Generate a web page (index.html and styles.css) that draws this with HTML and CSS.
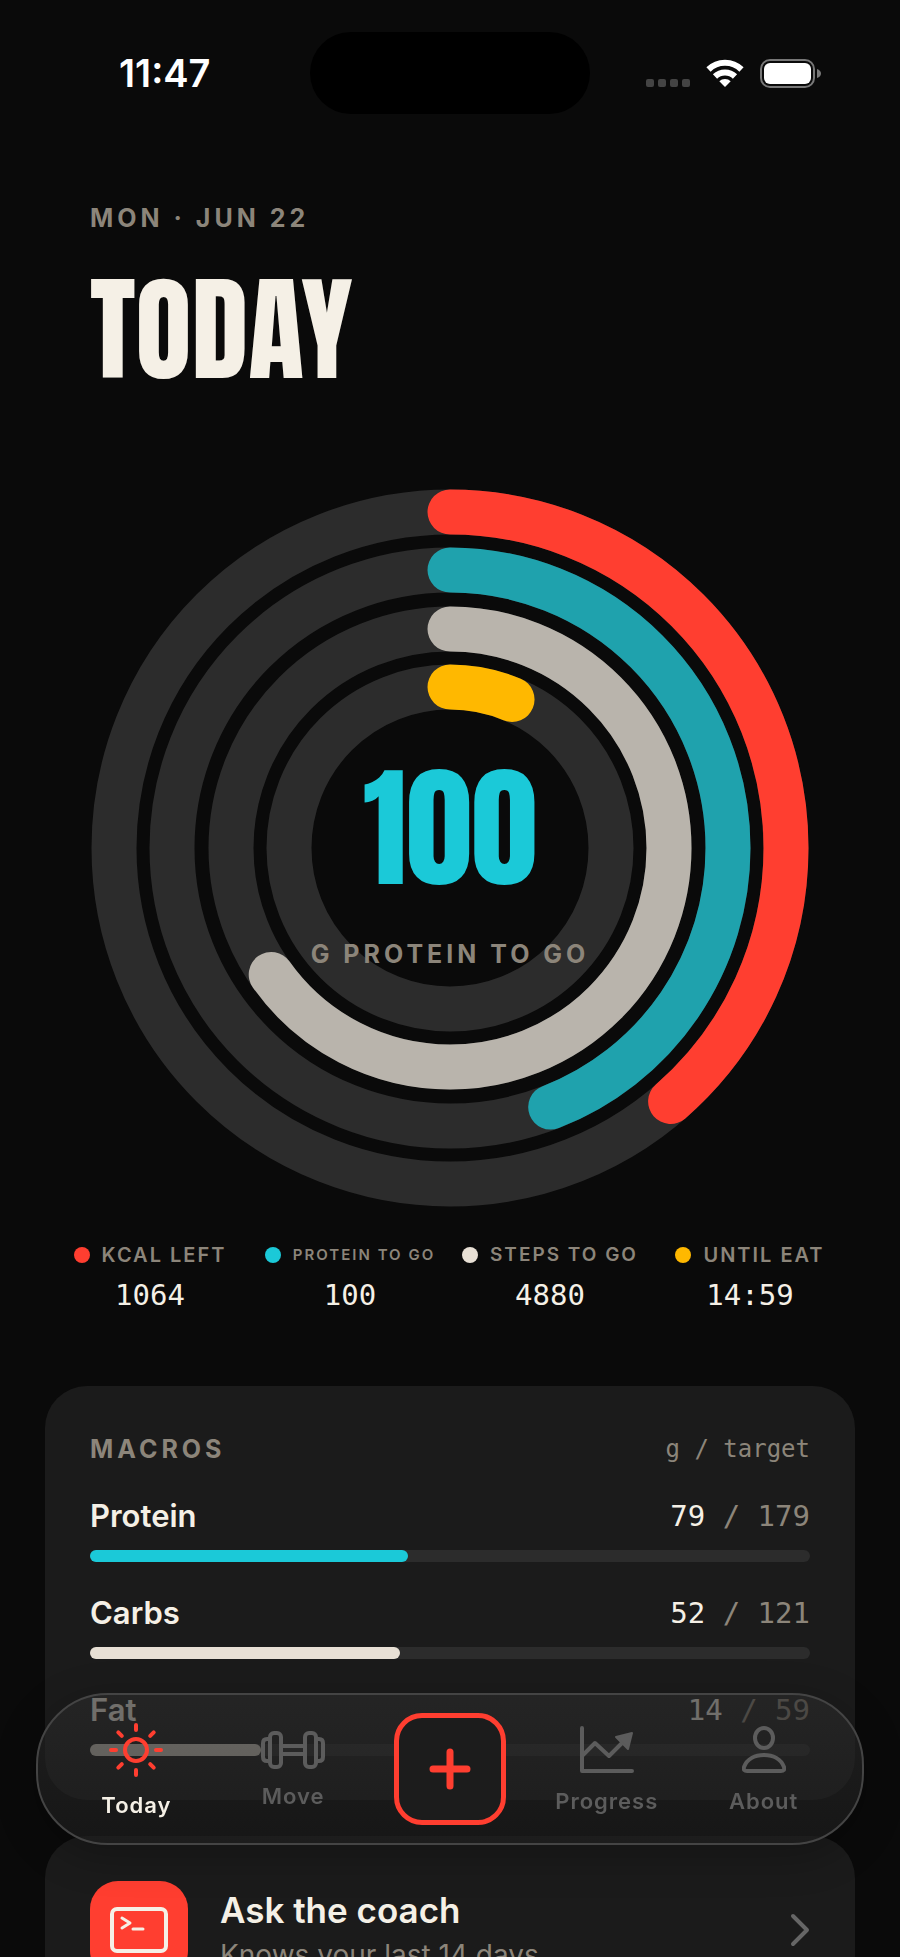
FILE: index.html
```html
<!DOCTYPE html>
<html lang="en">
<head>
  <meta charset="UTF-8">
  <meta name="viewport" content="width=device-width, initial-scale=1.0">
  <title>Today</title>
  <link rel="stylesheet" href="styles.css">
</head>
<body>
  <div class="screen">
    <div class="status-bar">
      <span class="time">11:47</span>
      <div class="island"></div>
      <div class="status-icons">
        <div class="signal"><i></i><i></i><i></i><i></i></div>
        <svg class="wifi" viewBox="0 0 38 28" fill="none" stroke="#fff">
          <path d="M2.5 10.5a23.500 23.500 0 0 1 33 0" stroke-width="6"/>
          <path d="M9 17.500a14.200 14.200 0 0 1 20 0" stroke-width="6"/>
          <path d="M13.300 22.300a8 8 0 0 1 11.400 0L19 28z" fill="#fff" stroke="none"/>
        </svg>
        <svg class="battery" viewBox="0 0 61 29">
          <rect x="1" y="1" width="53" height="27" rx="9" fill="none" stroke="#777" stroke-width="2"/>
          <rect x="4" y="4" width="47" height="21" rx="6" fill="#fff"/>
          <path d="M57 10v9q4-1.500 4-4.500t-4-4.500z" fill="#777"/>
        </svg>
      </div>
    </div>

    <header class="header">
      <p class="label">Mon · Jun 22</p>
      <h1>TODAY</h1>
    </header>

    <section class="rings">
      <svg viewBox="0 0 718 718" fill="none" stroke-width="45" stroke-linecap="round">
        <g stroke="#2c2c2c">
          <circle cx="359" cy="359" r="336"/>
          <circle cx="359" cy="359" r="278"/>
          <circle cx="359" cy="359" r="219"/>
          <circle cx="359" cy="359" r="161"/>
        </g>
        <g transform="rotate(-90 359 359)">
          <circle cx="359" cy="359" r="336" stroke="#ff3e30" pathLength="1000" stroke-dasharray="386 1000"/>
          <circle cx="359" cy="359" r="278" stroke="#1fa2ad" pathLength="1000" stroke-dasharray="441 1000"/>
          <circle cx="359" cy="359" r="219" stroke="#b9b4ac" pathLength="1000" stroke-dasharray="652 1000"/>
          <circle cx="359" cy="359" r="161" stroke="#ffb800" pathLength="1000" stroke-dasharray="63 1000"/>
        </g>
      </svg>
      <div class="rings-center">
        <strong>100</strong>
        <span class="label">g protein to go</span>
      </div>
    </section>

    <section class="legend">
      <div class="legend-item red">
        <span class="legend-label">Kcal left</span>
        <span class="value">1064</span>
      </div>
      <div class="legend-item cyan">
        <span class="legend-label small">Protein to go</span>
        <span class="value">100</span>
      </div>
      <div class="legend-item cream">
        <span class="legend-label medium">Steps to go</span>
        <span class="value">4880</span>
      </div>
      <div class="legend-item yellow">
        <span class="legend-label">Until eat</span>
        <span class="value">14:59</span>
      </div>
    </section>

    <section class="card macros">
      <div class="card-head">
        <h2 class="label">Macros</h2>
        <span class="unit">g / target</span>
      </div>
      <div class="macro">
        <div class="macro-row"><span>Protein</span><span class="value">79 <em>/ 179</em></span></div>
        <div class="bar"><div class="fill cyan" style="width: 44.1%"></div></div>
      </div>
      <div class="macro">
        <div class="macro-row"><span>Carbs</span><span class="value">52 <em>/ 121</em></span></div>
        <div class="bar"><div class="fill cream" style="width: 43%"></div></div>
      </div>
      <div class="macro">
        <div class="macro-row"><span>Fat</span><span class="value">14 <em>/ 59</em></span></div>
        <div class="bar"><div class="fill sand" style="width: 23.7%"></div></div>
      </div>
    </section>

    <a class="card coach" href="#coach">
      <span class="coach-icon">
        <svg viewBox="0 0 58 46" fill="none" stroke="#f5f0e6" stroke-width="4" stroke-linecap="round" stroke-linejoin="round">
          <rect x="2" y="2" width="54" height="42" rx="5"/>
          <path d="M12 11l8 5-8 5M23 22h10" stroke-width="3"/>
        </svg>
      </span>
      <span class="coach-text">
        <span class="coach-title">Ask the coach</span>
        <span class="coach-sub">Knows your last 14 days</span>
      </span>
      <svg class="chevron" viewBox="0 0 20 34" fill="none" stroke="#666" stroke-width="4" stroke-linecap="round" stroke-linejoin="round">
        <path d="M3 3l14 14L3 31"/>
      </svg>
    </a>
  </div>

  <nav class="tab-bar">
    <a class="tab active" href="#today">
      <svg width="56" height="56" viewBox="0 0 56 56" fill="none" stroke="#ff3e30" stroke-width="4" stroke-linecap="round">
        <circle cx="28" cy="28" r="11"/>
        <path d="M28 3v5M28 48v5M3 28h5M48 28h5M10.300 10.300l3.500 3.500M42.200 42.200l3.500 3.500M10.300 45.700l3.500-3.500M42.200 13.800l3.500-3.500"/>
      </svg>
      Today
    </a>
    <a class="tab" href="#move">
      <svg width="64" height="38" viewBox="0 0 64 38" fill="none" stroke="#5c5c5c" stroke-width="4" stroke-linejoin="round">
        <rect x="9" y="2" width="11" height="34" rx="4"/>
        <rect x="44" y="2" width="11" height="34" rx="4"/>
        <path d="M9 8H6q-4 0-4 4v14q0 4 4 4h3M55 8h3q4 0 4 4v14q0 4-4 4h-3M20 15h24M20 23h24"/>
      </svg>
      Move
    </a>
    <button class="add" aria-label="Add">
      <svg width="42" height="42" viewBox="0 0 42 42" stroke="#ff3e30" stroke-width="7" stroke-linecap="round">
        <path d="M21 4v34M4 21h34"/>
      </svg>
    </button>
    <a class="tab" href="#progress">
      <svg width="54" height="48" viewBox="0 0 54 48" fill="none" stroke="#5c5c5c" stroke-width="4" stroke-linecap="round" stroke-linejoin="round">
        <path d="M2 2v43h50M3 29l12-12 14 13L43 16"/>
        <path d="M36 11l16-4-4 16z" fill="#5c5c5c" stroke-width="2"/>
      </svg>
      Progress
    </a>
    <a class="tab" href="#about">
      <svg width="44" height="48" viewBox="0 0 44 48" fill="none" stroke="#5c5c5c" stroke-width="4" stroke-linejoin="round">
        <ellipse cx="22" cy="12" rx="9" ry="10"/>
        <path d="M5 45h34q4 0 3-4C39 33 31 29 22 29S5 33 2 41q-1 4 3 4z"/>
      </svg>
      About
    </a>
  </nav>
</body>
</html>
```
FILE: styles.css
```css
* {
  margin: 0;
  padding: 0;
  box-sizing: border-box;
}

body {
  font-family: Inter, "Liberation Sans", sans-serif;
  background: #0a0a0a;
  color: #f5f0e6;
}

.screen {
  height: 100vh;
  overflow-y: auto;
  scrollbar-width: none;
}

.status-bar {
  display: grid;
  grid-template-columns: 1fr 280px 1fr;
  align-items: center;
  padding: 32px 79px 0;
}

.time {
  padding-left: 40px;
  font-size: 38px;
  font-weight: 600;
  line-height: 44px;
  color: #fff;
}

.island {
  height: 82px;
  border-radius: 41px;
  background: #000;
}

.status-icons {
  display: flex;
  justify-content: flex-end;
  align-items: center;
  gap: 16px;
}

.signal {
  display: flex;
  gap: 4px;
  padding-top: 20px;
}

.signal i {
  width: 8px;
  height: 8px;
  border-radius: 2px;
  background: #444;
}

.wifi {
  width: 38px;
  height: 28px;
}

.battery {
  width: 61px;
  height: 29px;
}

.label {
  font-size: 25px;
  font-weight: 700;
  line-height: 32px;
  letter-spacing: 4px;
  text-transform: uppercase;
  color: #8c857a;
}

.header {
  padding: 88px 90px 0;
}

h1 {
  font-family: Anton, Impact, sans-serif;
  font-size: 115px;
  font-weight: 400;
  line-height: 140px;
  margin-top: 26px;
}

.rings {
  position: relative;
  margin: 89px 91px 0;
}

.rings > svg {
  display: block;
  width: 100%;
}

.rings-center {
  position: absolute;
  inset: 0;
  display: flex;
  flex-direction: column;
  align-items: center;
  justify-content: center;
  gap: 30px;
  padding-top: 22px;
}

.rings-center strong {
  font-family: Anton, Impact, sans-serif;
  font-size: 132px;
  font-weight: 400;
  line-height: 160px;
  color: #1bc9d8;
}

.legend {
  display: grid;
  grid-template-columns: repeat(4, 1fr);
  padding: 34px 50px 0;
}

.legend-item {
  display: flex;
  flex-direction: column;
  align-items: center;
  gap: 8px;
}

.legend-label {
  display: flex;
  align-items: center;
  gap: 12px;
  font-size: 20px;
  font-weight: 600;
  line-height: 28px;
  letter-spacing: 2px;
  text-transform: uppercase;
  white-space: nowrap;
  color: #8c857a;
}

.legend-label::before {
  content: "";
  width: 16px;
  height: 16px;
  border-radius: 50%;
}

.legend-label.medium {
  font-size: 19px;
}

.legend-label.small {
  font-size: 15px;
}

.red .legend-label::before {
  background: #ff3e30;
}

.cyan .legend-label::before,
.fill.cyan {
  background: #1bc9d8;
}

.cream .legend-label::before,
.fill.cream {
  background: #e8e0d5;
}

.yellow .legend-label::before {
  background: #ffb800;
}

.value {
  font-family: "DejaVu Sans Mono", monospace;
  font-size: 29px;
  line-height: 36px;
}

.value em {
  font-style: normal;
  color: #8c857a;
}

.card {
  margin: 0 45px;
  padding: 45px;
  border-radius: 42px;
  background: #1b1b1b;
}

.macros {
  margin-top: 73px;
  padding-top: 47px;
  padding-bottom: 44px;
}

.card-head,
.macro-row {
  display: flex;
  justify-content: space-between;
  align-items: center;
}

.unit {
  font-family: "DejaVu Sans Mono", monospace;
  font-size: 24px;
  line-height: 32px;
  color: #8c857a;
}

.macro {
  margin-top: 33px;
}

.macro-row {
  font-size: 31px;
  font-weight: 600;
  line-height: 36px;
}

.macro-row .value {
  font-weight: 400;
}

.bar {
  height: 12px;
  margin-top: 16px;
  border-radius: 6px;
  background: #2c2c2c;
}

.fill {
  height: 12px;
  border-radius: 6px;
}

.fill.sand {
  background: #d8d2c6;
}

.coach {
  display: flex;
  gap: 32px;
  margin-top: 36px;
  color: #f5f0e6;
  text-decoration: none;
}

.coach-icon {
  display: flex;
  align-items: center;
  justify-content: center;
  width: 98px;
  height: 98px;
  border-radius: 28px;
  background: #ff3e30;
}

.coach-icon svg {
  width: 58px;
  height: 46px;
}

.coach-text {
  display: flex;
  flex: 1;
  flex-direction: column;
  padding-top: 8px;
}

.coach-title {
  font-size: 35px;
  font-weight: 600;
  line-height: 42px;
}

.coach-sub {
  font-size: 28px;
  line-height: 36px;
  color: #8c857a;
  margin-top: 6px;
}

.chevron {
  width: 20px;
  height: 34px;
  align-self: center;
}

/* floating glass tab bar */
.tab-bar {
  position: fixed;
  left: 36px;
  right: 36px;
  bottom: 112px;
  height: 152px;
  display: grid;
  grid-template-columns: repeat(5, 1fr);
  align-items: center;
  justify-items: center;
  padding: 0 20px;
  border: 2px solid #444;
  border-radius: 72px;
  background: linear-gradient(rgba(42, 42, 42, 0.65), rgba(30, 30, 30, 0.65));
  box-shadow: 0 10px 40px rgba(0, 0, 0, 0.25);
}

.tab {
  display: flex;
  flex-direction: column;
  align-items: center;
  gap: 13px;
  padding-top: 3px;
  font-size: 22px;
  font-weight: 600;
  line-height: 28px;
  letter-spacing: 1px;
  color: #5c5c5c;
  text-decoration: none;
}

.tab.active {
  color: #f5f0e6;
}

.add {
  display: flex;
  align-items: center;
  justify-content: center;
  width: 112px;
  height: 112px;
  border: 5px solid #ff3e30;
  border-radius: 28px;
  background: #1c1c1c;
}
```
